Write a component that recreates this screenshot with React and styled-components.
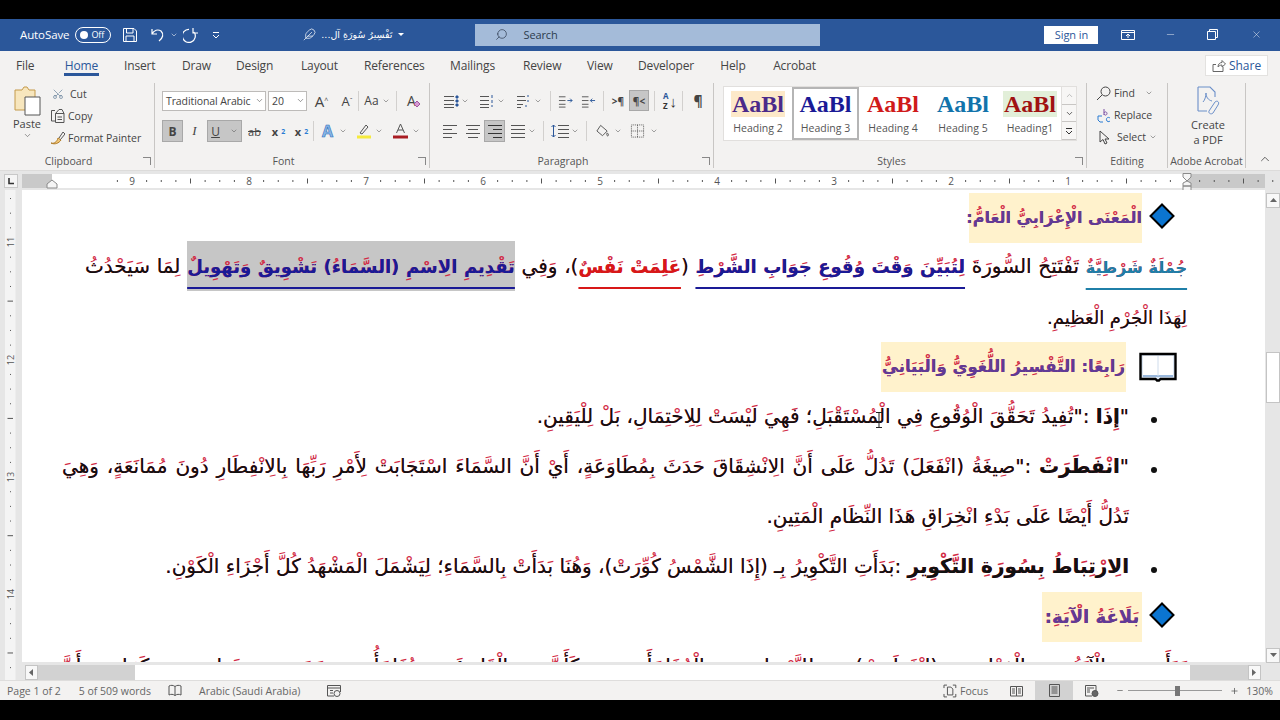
import React, { createContext, useContext } from 'react';
import styled, { createGlobalStyle } from 'styled-components';
import { ChevronDown, Scissors, Feather, Search, Minus, X, Plus, ChevronUp } from 'lucide-react';

const GlobalStyle = createGlobalStyle`
  html, body { margin: 0; padding: 0; background: #000; }
  body { font-family: 'Open Sans', 'Noto Sans', sans-serif; }
  * { box-sizing: border-box; }
`;

const Shell = styled.div`
  width: 1280px;
  height: 720px;
  display: flex;
  flex-direction: column;
  background: #000;
  overflow: hidden;
`;

const Band = styled.div`
  height: ${(p) => p.$h}px;
  flex: none;
  background: #000;
`;

/* ---------- title bar ---------- */
const TitleBar = styled.div`
  height: 32px;
  flex: none;
  background: #2b579a;
  color: #fff;
  display: flex;
  align-items: center;
  font-size: 11.5px;
  letter-spacing: -0.1px;
  padding-left: 20px;
  padding-bottom: 1px;
`;

const QatIcon = styled.span`
  display: inline-flex;
  align-items: center;
  justify-content: center;
  width: ${(p) => p.$w}px;
  margin-left: ${(p) => p.$ml || 0}px;
  margin-right: ${(p) => p.$mr || 0}px;
  color: #fff;
`;

const Toggle = styled.span`
  width: 36px;
  height: 16px;
  margin-left: 6px;
  border: 1px solid #fff;
  border-radius: 8px;
  display: inline-flex;
  align-items: center;
  padding-left: 4px;
  gap: 3px;
  font-size: 9px;
  &::before {
    content: '';
    width: 8px;
    height: 8px;
    border-radius: 50%;
    background: #fff;
  }
`;

const DocTitle = styled.span`
  width: 72px;
  margin-left: 4px;
  direction: rtl;
  font-family: 'DejaVu Sans', sans-serif;
  font-size: 9.5px;
  white-space: nowrap;
`;

const SearchBox = styled.div`
  width: 345px;
  height: 22px;
  margin-left: 70px;
  background: #a4bbd9;
  color: #2d3b4e;
  display: flex;
  align-items: center;
  padding-left: 20px;
  gap: 15px;
  font-size: 11px;
`;

const SignIn = styled.div`
  width: 54px;
  height: 18px;
  margin-left: 224px;
  background: #fff;
  color: #2b579a;
  display: flex;
  align-items: center;
  justify-content: center;
  font-size: 11px;
`;

/* ---------- tabs ---------- */
const TabBar = styled.div`
  height: 29px;
  flex: none;
  background: #f3f2f1;
  display: flex;
  align-items: center;
  padding-left: 16px;
  position: relative;
`;

const Tab = styled.span`
  font-size: 12px;
  letter-spacing: -0.15px;
  color: ${(p) => (p.$on ? '#2b579a' : '#444')};
  width: ${(p) => p.$w}px;
  margin-right: ${(p) => p.$gap}px;
  line-height: 30px;
  text-align: center;
  border-bottom: ${(p) => (p.$on ? '3px solid #2b579a' : 'none')};
  height: ${(p) => (p.$on ? 25 : 29)}px;
  margin-bottom: ${(p) => (p.$on ? 4 : 0)}px;
`;

const ShareButton = styled.div`
  margin-left: auto;
  margin-right: 12px;
  width: 63px;
  height: 21px;
  background: #fff;
  border: 1px solid #e3e2e0;
  display: flex;
  align-items: center;
  justify-content: center;
  gap: 3px;
  font-size: 12px;
  color: #2b579a;
`;

/* ---------- ribbon ---------- */
const Ribbon = styled.div`
  height: 90px;
  flex: none;
  background: #f3f2f1;
  display: flex;
  align-items: flex-start;
  color: #444;
  font-size: 11px;
`;

const Group = styled.div`
  width: ${(p) => p.$w}px;
  height: 85px;
  margin-top: 3px;
  flex: none;
  display: flex;
  flex-direction: column;
  border-right: ${(p) => (p.$noline ? 'none' : '1px solid #c8c6c4')};
`;

const GroupBody = styled.div`
  flex: 1;
  display: flex;
  padding: ${(p) => p.$pad || '7px 0 0 7px'};
`;

const GroupLabel = styled.div`
  height: 15px;
  display: flex;
  align-items: center;
  font-size: 10.5px;
  color: #555;
`;

const LabelText = styled.span`
  flex: 1;
  text-align: center;
`;

const Launcher = styled.span`
  width: 8px;
  height: 8px;
  margin: 0 3px 0 6px;
  border-left: 1px solid #888;
  border-bottom: 1px solid #888;
  position: relative;
  transform: rotate(180deg);
`;

const PasteCol = styled.div`
  width: 34px;
  margin-right: 6px;
  flex: none;
  display: flex;
  flex-direction: column;
  align-items: center;
  color: #444;
`;

const SmallCol = styled.div`
  display: flex;
  flex-direction: column;
  margin-top: ${(p) => p.$mt || 0}px;
  gap: ${(p) => p.$gap || 3}px;
`;

const SmallRow = styled.div`
  display: flex;
  align-items: center;
  height: ${(p) => p.$h || 19}px;
  white-space: nowrap;
  font-size: 10.5px;
  gap: ${(p) => p.$gap || 3}px;
  margin-left: ${(p) => p.$ml || 0}px;
`;

const Tools = styled.div`
  display: flex;
  flex-direction: column;
  gap: 9px;
`;

const ToolRow = styled.div`
  display: flex;
  align-items: center;
  height: ${(p) => p.$h || 21}px;
`;

const Tool = styled.span`
  flex: none;
  width: ${(p) => p.$w}px;
  height: ${(p) => p.$h || 21}px;
  margin-left: ${(p) => p.$ml || 0}px;
  display: inline-flex;
  align-items: center;
  justify-content: center;
  gap: 3px;
  color: #444;
  font-size: ${(p) => p.$fs || 12}px;
  font-family: ${(p) => p.$serif || 'inherit'};
  font-style: ${(p) => (p.$it ? 'italic' : 'normal')};
  font-weight: ${(p) => (p.$b ? 700 : 400)};
  background: ${(p) => (p.$on ? '#c6c6c6' : 'transparent')};
  border: ${(p) => (p.$on ? '1px solid #a8a8a8' : 'none')};
`;

const Divider = styled.span`
  flex: none;
  width: 1px;
  height: 20px;
  margin-left: ${(p) => p.$ml || 0}px;
  background: #d2d0ce;
`;

const Combo = styled.span`
  flex: none;
  width: ${(p) => p.$w}px;
  height: 20px;
  margin-left: ${(p) => p.$ml || 0}px;
  padding: 0 1px 0 3px;
  background: #fff;
  border: 1px solid #bdbbb9;
  display: inline-flex;
  align-items: center;
  justify-content: space-between;
  font-size: 10.5px;
  letter-spacing: -0.1px;
  white-space: nowrap;
`;

const Gallery = styled.div`
  margin-left: 9px;
  width: 354px;
  height: 55px;
  background: #fff;
  border: 1px solid #e1dfdd;
  display: flex;
`;

const StyleItem = styled.div`
  width: ${(p) => p.$w}px;
  flex: none;
  display: flex;
  flex-direction: column;
  align-items: center;
  padding-top: ${(p) => (p.$on ? 2 : 4)}px;
  border: ${(p) => (p.$on ? '2px solid #b5b5b5' : 'none')};
  font-size: 10.5px;
  color: #555;
`;

const Preview = styled.span`
  font-family: 'Liberation Serif', serif;
  font-weight: 700;
  font-size: 24px;
  line-height: 26px;
  height: 26px;
  padding: 0 1px;
  color: ${(p) => p.$c};
  background: ${(p) => p.$bg || 'transparent'};
  margin-bottom: 4px;
`;

const GalleryScroll = styled.div`
  margin-left: auto;
  width: 15px;
  display: flex;
  flex-direction: column;
  border-left: 1px solid #e1dfdd;
`;

const GalleryBtn = styled.span`
  flex: 1;
  display: flex;
  align-items: center;
  justify-content: center;
  background: #f7f6f5;
  border-bottom: 1px solid #c8c6c4;
  color: ${(p) => p.$c || '#333'};
`;

const Stack = styled.div`
  display: flex;
  flex-direction: column;
  align-items: center;
  line-height: 15px;
  width: 100%;
`;

const Collapse = styled.span`
  margin-left: 12px;
  margin-top: 72px;
  color: #444;
  display: inline-flex;
`;

/* ---------- rulers ---------- */
const RulerBar = styled.div`
  height: 20px;
  flex: none;
  background: #e6e6e6;
  display: flex;
  align-items: center;
  border-top: 1px solid #dcdbda;
`;

const CornerBox = styled.span`
  width: 14px;
  height: 14px;
  margin: 0 4px;
  background: #f5f5f5;
  border: 1px solid #c8c8c8;
  display: flex;
  align-items: center;
  justify-content: center;
`;

const Workspace = styled.div`
  flex: 1;
  min-height: 0;
  display: grid;
  grid-template-columns: 22px 1243px 15px;
  grid-template-rows: 472px 18px;
  background: #e6e6e6;
`;

const VRulerCell = styled.div`
  grid-column: 1;
  grid-row: 1 / 3;
  background: #e6e6e6;
  overflow: hidden;
`;

/* ---------- document ---------- */
const Page = styled.div`
  grid-column: 2;
  grid-row: 1;
  background: #fff;
  overflow: hidden;
  direction: rtl;
  padding: 3px 78px 0 0;
  font-family: 'DejaVu Sans', sans-serif;
  color: #111;
`;

const Row = styled.div`
  height: 49.85px;
  line-height: 49.85px;
  font-size: ${(p) => p.$fs || 20}px;
  display: flex;
  align-items: center;
  white-space: nowrap;
  padding-right: ${(p) => p.$inset || 0}px;
`;

const Line = styled.div`
  width: ${(p) => p.$w}px;
  flex: none;
  white-space: nowrap;
  text-align: justify;
  text-align-last: ${(p) => (p.$fit ? 'justify' : 'right')};
`;

const HeadRow = styled(Row)`
  gap: ${(p) => p.$gap}px;
`;

const HeadBand = styled.div`
  height: 50px;
  line-height: 50px;
  width: ${(p) => p.$w}px;
  text-align: center;
  font-size: ${(p) => p.$fs || 20}px;
  font-weight: 700;
  color: #5f3b97;
  background: #fff2cc;
  white-space: nowrap;
`;

const Dot = styled.span`
  flex: none;
  width: 6px;
  height: 6px;
  border-radius: 50%;
  background: #111;
  margin-left: 22px;
  margin-top: 6px;
`;

const Colored = styled.span`
  color: ${(p) => p.$c};
  font-size: ${(p) => p.$fs || 18}px;
  font-weight: 700;
  text-decoration: underline;
  text-decoration-color: ${(p) => p.$c};
  text-decoration-thickness: 2px;
  text-underline-offset: ${(p) => p.$off || 14}px;
  text-decoration-skip-ink: none;
`;

const Selected = styled.span`
  background: #c6c6c6;
  padding: 13px 0;
`;

const Strong = styled.b`
  font-weight: 700;
`;

/* the harakat are red: a red copy of the voweled text sits under the bare letters */
const InkStack = styled.div`
  display: grid;
  & > * {
    grid-area: 1 / 1;
  }
`;

const MarkInk = styled.div`
  color: #d22a45;
  user-select: none;
  & * {
    color: inherit !important;
    text-decoration-color: transparent !important;
  }
`;

const BaseInk = styled.div`
  ${Selected} {
    background: transparent;
  }
`;

const Cursor = styled.span`
  position: absolute;
  left: 875px;
  top: 411px;
  display: block;
`;

const VScroll = styled.div`
  grid-column: 3;
  grid-row: 1 / 3;
  display: flex;
  flex-direction: column;
  background: #e6e6e6;
  padding: 3px 0 17px 1px;
`;

const ScrollBtn = styled.span`
  height: 15px;
  flex: none;
  background: #f8f8f8;
  border: 1px solid #c4c4c4;
  display: flex;
  align-items: center;
  justify-content: center;
  margin-top: ${(p) => p.$mt || 'auto'};
`;

const Thumb = styled.span`
  height: 51px;
  flex: none;
  background: #fff;
  border: 1px solid #c4c4c4;
  margin-top: 144px;
`;

const HScroll = styled.div`
  grid-column: 2;
  grid-row: 2;
  display: flex;
  align-items: center;
  padding: 3px 4px 0 3px;
  background: #e6e6e6;
`;

const HBtn = styled.span`
  width: 13px;
  height: 15px;
  flex: none;
  background: #f8f8f8;
  border: 1px solid #c4c4c4;
  display: flex;
  align-items: center;
  justify-content: center;
`;

const HTrack = styled.span`
  flex: 1;
  height: 15px;
  background: #d2d2d2;
  display: flex;
  padding: 0 58px 0 97px;
`;

const HThumb = styled.span`
  flex: 1;
  background: #fff;
`;

/* ---------- status bar ---------- */
const StatusBar = styled.div`
  height: 20px;
  flex: none;
  background: #f3f2f1;
  border-top: 1px solid #dedddc;
  display: flex;
  align-items: center;
  font-size: 10.5px;
  color: #666;
  padding-left: 7px;
`;

const StatusItem = styled.span`
  flex: none;
  white-space: nowrap;
  margin-left: ${(p) => p.$ml || 0}px;
  width: ${(p) => (p.$w ? `${p.$w}px` : 'auto')};
  display: inline-flex;
  align-items: center;
  justify-content: center;
  gap: 3px;
`;

const ViewBtn = styled.span`
  width: ${(p) => p.$w}px;
  height: 19px;
  flex: none;
  margin-left: ${(p) => p.$ml || 0}px;
  display: inline-flex;
  align-items: center;
  justify-content: center;
  background: ${(p) => (p.$on ? '#d2d2d2' : 'transparent')};
`;

const ZoomSlider = styled.span`
  width: 94px;
  height: 1px;
  flex: none;
  margin-left: 4px;
  background: #9a9a9a;
  display: flex;
  align-items: center;
  padding-left: 47px;
  &::after {
    content: '';
    width: 5px;
    height: 10px;
    background: #777;
  }
`;

/* ---------- helpers and drawings ---------- */
const MarksOn = createContext(true);

const Voc = ({ t }) => {
  const on = useContext(MarksOn);
  return on ? t : t.replace(/[\u064B-\u0652\u0670]/g, '');
};

const Inked = ({ children }) => (
  <InkStack>
    <MarkInk aria-hidden="true">{children}</MarkInk>
    <BaseInk>
      <MarksOn.Provider value={false}>{children}</MarksOn.Provider>
    </BaseInk>
  </InkStack>
);

const Caret = ({ s = 9, c = '#555' }) => <ChevronDown size={s} color={c} strokeWidth={1.6} />;

const Svg = ({ w = 16, h = 16, children, ...rest }) => (
  <svg width={w} height={h} viewBox={`0 0 ${w} ${h}`} fill="none" stroke="#555" strokeWidth="1" {...rest}>
    {children}
  </svg>
);

const Lines = ({ x1 = 1, x2 = 15, ys = [3, 7, 11, 14], stroke = '#555' }) =>
  ys.map((y, i) => <path key={i} d={`M${Array.isArray(x1) ? x1[i] : x1} ${y + 0.5}H${Array.isArray(x2) ? x2[i] : x2}`} stroke={stroke} />);

const Diamond = () => (
  <svg width="26" height="26" viewBox="0 0 26 26" style={{ flex: 'none', marginBottom: 3 }}>
    <path d="M13 1.5 24.5 13 13 24.5 1.5 13Z" fill="#0b75d1" stroke="#000" strokeWidth="2" />
  </svg>
);

const BookIcon = () => (
  <svg width="38" height="30" viewBox="0 0 38 30" style={{ flex: 'none' }}>
    <path d="M1.5 2H36.5V27H21.5L20 28.5H18L16.5 27H1.5Z" fill="#dbe6f3" stroke="#000" strokeWidth="2.4" />
    <path d="M4 4H34V23H4Z" fill="#fff" />
    <path d="M4 24H34" stroke="#9ab8dc" strokeWidth="2" />
    <path d="M19 4V24" stroke="#cfdcec" />
  </svg>
);

const tick = (i) => (i % 8 === 0 ? 0 : i % 4 === 0 ? 2 : 0.5);

const HRuler = () => {
  const marks = [];
  for (let i = -1; i < 86; i++) marks.push(i);
  return (
    <svg width="1243" height="14" viewBox="0 0 1243 14" style={{ overflow: 'visible' }}>
      <rect width="1243" height="14" fill="#fff" />
      <rect width="30" height="14" fill="#c9c9c9" />
      <rect x="1165" width="78" height="14" fill="#c9c9c9" />
      {marks.map((i) => {
        const x = 110 + (i - 8) * 14.625 + 117;
        if (i % 8 === 0) return null;
        const h = tick(i);
        return <path key={i} d={`M${x} ${7 - h - 0.5}V${7 + h + 0.5}`} stroke="#555" strokeWidth="1" />;
      })}
      {[9, 8, 7, 6, 5, 4, 3, 2, 1].map((n, i) => (
        <text key={n} x={110 + i * 117} y="10.5" fontSize="10" fill="#555" textAnchor="middle" fontFamily="Open Sans, sans-serif">
          {n}
        </text>
      ))}
      <path d="M25 14V10L30 6L35 10V14Z" fill="#f5f5f5" stroke="#8a8a8a" />
      <path d="M1161 -.5H1169V3L1165 7L1161 3Z" fill="#f5f5f5" stroke="#8a8a8a" />
      <path d="M1161 12V9L1165 7L1169 9V12ZM1161 12H1169V17H1161Z" fill="#f5f5f5" stroke="#8a8a8a" />
    </svg>
  );
};

const VRuler = () => {
  const marks = [];
  for (let i = 0; i < 36; i++) marks.push(i);
  return (
    <svg width="22" height="490" viewBox="0 0 22 490">
      <rect x="5" width="10.5" height="490" fill="#f4f4f4" />
      {marks.map((i) => {
        const y = 52 - 14.66 * 4 + i * 14.66 + 0.5;
        if (i % 8 === 4) return null;
        const half = i % 8 === 0;
        return <path key={i} d={half ? `M7.5 ${y}H13` : `M10 ${y}h1`} stroke="#555" />;
      })}
      {[['11', 52], ['12', 170], ['13', 287], ['14', 404]].map(([n, y]) => (
        <text key={n} transform={`translate(13.5 ${y}) rotate(-90)`} fontSize="9" fill="#555" textAnchor="middle" fontFamily="Open Sans, sans-serif">
          {n}
        </text>
      ))}
    </svg>
  );
};

const TABS = [
  ['File', 17, 31], ['Home', 35, 25], ['Insert', 31, 27], ['Draw', 28, 26], ['Design', 37, 28], ['Layout', 35, 28],
  ['References', 59, 27], ['Mailings', 45, 28], ['Review', 37, 27], ['View', 25, 26], ['Developer', 56, 26],
  ['Help', 26, 27], ['Acrobat', 43, 0],
];

const STYLES = [
  ['Heading 2', '#4b2a8a', '#fde9c9', 68],
  ['Heading 3', '#1a1a96', null, 67, true],
  ['Heading 4', '#d01a1a', null, 68],
  ['Heading 5', '#1273ab', null, 72],
  ['Heading1', '#a01212', '#e2efd9', 62],
];

export default function App() {
  return (
    <Shell>
      <GlobalStyle />
      <Band $h={19} />
      <TitleBar>
        <span>AutoSave</span>
        <Toggle>Off</Toggle>
        <QatIcon $w={16} $ml={11}>
          <Svg stroke="#fff"><path d="M1.5 1.5H12L14.5 4V14.5H1.5ZM4.5 1.5V6H11V1.5M4 14.5V9H12V14.5" /></Svg>
        </QatIcon>
        <QatIcon $w={16} $ml={12}>
          <Svg stroke="#fff" strokeWidth="1.2"><path d="M2 2V7H7M2 7C4 3 8 2 11 4C14 7 13 11 9 14" /></Svg>
        </QatIcon>
        <QatIcon $w={10} $ml={3}><Caret c="#fff" s={8} /></QatIcon>
        <QatIcon $w={16} $ml={4}>
          <Svg stroke="#fff" strokeWidth="1.2"><path d="M10 1V6H15M11 5A6.5 6.5 0 1 1 6 2.4" /></Svg>
        </QatIcon>
        <QatIcon $w={8} $ml={13}>
          <Svg w={8} h={8} stroke="#fff"><path d="M1 1.5H7M1 4L4 7L7 4" /></Svg>
        </QatIcon>
        <QatIcon $w={14} $ml={82}><Feather size={13} color="#fff" strokeWidth={1.3} /></QatIcon>
        <DocTitle>تَفْسِيرُ سُورَةِ آل...</DocTitle>
        <QatIcon $w={8} $ml={5}>
          <Svg w={6} h={4} stroke="none"><path d="M0 0H6L3 3Z" fill="#fff" /></Svg>
        </QatIcon>
        <SearchBox>
          <Search size={13} color="#2d3b4e" strokeWidth={1.3} style={{ transform: 'scaleX(-1)' }} />
          Search
        </SearchBox>
        <SignIn>Sign in</SignIn>
        <QatIcon $w={14} $ml={23}>
          <Svg w={14} h={12} stroke="#fff"><path d="M.5 1.5H13.5V10.5H.5ZM.5 3.5H13.5M7 9V5M5 7L7 5L9 7" /></Svg>
        </QatIcon>
        <QatIcon $w={11} $ml={30}><Minus size={11} color="#fff" strokeWidth={1} /></QatIcon>
        <QatIcon $w={11} $ml={31}>
          <Svg w={11} h={11} stroke="#fff"><path d="M.5 2.5H8.5V10.5H.5ZM2.5 2.5V.5H10.5V8.5H8.5" /></Svg>
        </QatIcon>
        <QatIcon $w={11} $ml={33}><X size={13} color="#fff" strokeWidth={1} /></QatIcon>
      </TitleBar>

      <TabBar>
        {TABS.map(([name, w, gap]) => (
          <Tab key={name} $w={w} $gap={gap} $on={name === 'Home'}>{name}</Tab>
        ))}
        <ShareButton>
          <Svg w={14} h={13} stroke="#666"><path d="M1 5.5H4M1 5.5V12.5H11V8M6 8C6 5 8 3.5 10 3.5V1.5L13.5 5L10 8V6C8 6 7 7 6 8Z" /></Svg>
          Share
        </ShareButton>
      </TabBar>

      <Ribbon>
        <Group $w={155}>
          <GroupBody $pad="3px 0 0 10px">
            <PasteCol>
              <svg width="28" height="30" viewBox="0 0 28 30" style={{ flex: 'none' }}>
                <path d="M2 4H9L11 1H14L16 4H22V24H2Z" fill="#f7e6bd" stroke="#c49a4b" />
                <path d="M12 11H27V29H12Z" fill="#fff" stroke="#555" />
              </svg>
              <span>Paste</span>
              <Caret s={9} />
            </PasteCol>
            <SmallCol $gap={3} $mt={-2}>
              <SmallRow $gap={6} $ml={2}>
                <Scissors size={12} color="#53708f" strokeWidth={1.2} style={{ transform: 'rotate(-90deg)' }} /> Cut
              </SmallRow>
              <SmallRow $gap={2}>
                <Svg><path d="M5 2.5H1.5V13H5M5.5 5.5V14.5H14V5.5ZM5.5 5.5L9 1.5H12L14 5.5M7.5 9H12M7.5 11.5H12" /></Svg> Copy
              </SmallRow>
              <SmallRow $gap={3} >
                <Svg w={15} h={15}>
                  <path d="M1 13C4 14 7 12 8 8L11 10C9 13 5 15 1 13Z" fill="#f2c879" stroke="#b07a25" />
                  <path d="M9 8L13 2L15 4L10.5 9.5" stroke="#555" />
                </Svg>
                Format Painter
              </SmallRow>
            </SmallCol>
          </GroupBody>
          <GroupLabel><LabelText>Clipboard</LabelText><Launcher /></GroupLabel>
        </Group>

        <Group $w={275}>
          <GroupBody>
            <Tools>
              <ToolRow>
                <Combo $w={104}>Traditional Arabic <Caret s={9} /></Combo>
                <Combo $w={39} $ml={2}>20 <Caret s={9} /></Combo>
                <Tool $w={17} $ml={6} $fs={15}>A<sup style={{ fontSize: 7, marginLeft: -3 }}>^</sup></Tool>
                <Tool $w={18} $ml={8} $fs={13}>A<sup style={{ fontSize: 7, marginLeft: -3 }}>ˇ</sup></Tool>
                <Divider $ml={2} />
                <Tool $w={26} $ml={5} $fs={12}>Aa<Caret s={8} /></Tool>
                <Divider $ml={6} />
                <Tool $w={18} $ml={8} $fs={14}>A<svg width="8" height="8" viewBox="0 0 8 8" style={{ marginLeft: -6, marginTop: 6 }}><path d="M1 4L4 1L7 4L4 7Z" fill="#d69bd2" stroke="#a155a0" /></svg></Tool>
              </ToolRow>
              <ToolRow $h={22}>
                <Tool $w={21} $h={22} $on $b $fs={12}>B</Tool>
                <Tool $w={13} $ml={5} $it $serif="'Liberation Serif', serif" $fs={13}>I</Tool>
                <Tool $w={35} $h={22} $ml={6} $on $fs={12}><u>U</u><span style={{ width: 4 }} /><Caret s={8} /></Tool>
                <Tool $w={15} $ml={5} $fs={11}><s>ab</s></Tool>
                <Tool $w={13} $ml={10} $fs={11} $b>x<sub style={{ fontSize: 7, color: '#2b7cd3' }}>2</sub></Tool>
                <Tool $w={13} $ml={10} $fs={11} $b>x<sup style={{ fontSize: 7, color: '#2b7cd3' }}>2</sup></Tool>
                <Divider $ml={5} />
                <Tool $w={15} $ml={6} $fs={16} $b style={{ color: '#8ab8e8', WebkitTextStroke: '0.6px #2b6cb8' }}>A</Tool>
                <Tool $w={10} $ml={3}><Caret s={8} /></Tool>
                <Tool $w={16} $ml={8}>
                  <Svg h={18}>
                    <path d="M4 11L10 3L12 5L6 12Z" /><path d="M1 15H15" stroke="#f5ea3d" strokeWidth="3" />
                  </Svg>
                </Tool>
                <Tool $w={10} $ml={2}><Caret s={8} /></Tool>
                <Tool $w={15} $ml={9}>
                  <Svg w={15} h={18}>
                    <path d="M3.5 11L7.5 2L11.5 11M5 8H10" /><path d="M0 15H15" stroke="#a81c22" strokeWidth="3" />
                  </Svg>
                </Tool>
                <Tool $w={10} $ml={3}><Caret s={8} /></Tool>
              </ToolRow>
            </Tools>
          </GroupBody>
          <GroupLabel><LabelText>Font</LabelText><Launcher /></GroupLabel>
        </Group>

        <Group $w={284}>
          <GroupBody $pad="7px 0 0 12px">
            <Tools>
              <ToolRow>
                <Tool $w={17}><Svg><Lines x2={11} /><path d="M13 3h2v2h-2zM13 7h2v2h-2zM13 11h2v2h-2z" fill="#2b579a" stroke="#2b579a" /></Svg></Tool>
                <Tool $w={10} $ml={1}><Caret s={8} /></Tool>
                <Tool $w={17} $ml={8}><Svg><Lines x2={10} /><path d="M13 2v3M13 7v3M13 12v2" stroke="#2b579a" /></Svg></Tool>
                <Tool $w={10} $ml={1}><Caret s={8} /></Tool>
                <Tool $w={17} $ml={9}><Svg><Lines x2={[9, 10, 7, 5]} /><path d="M12 2v2M12 7v2M10 12v2" stroke="#2b579a" /></Svg></Tool>
                <Tool $w={10} $ml={1}><Caret s={8} /></Tool>
                <Divider $ml={7} />
                <Tool $w={15} $ml={7}><Svg><Lines x2={8} /><path d="M10 7.5H15M13 5.5L15 7.5L13 9.5" stroke="#2b579a" /></Svg></Tool>
                <Tool $w={15} $ml={8}><Svg><Lines x2={8} /><path d="M15 7.5H10M12 5.5L10 7.5L12 9.5" stroke="#2b579a" /></Svg></Tool>
                <Divider $ml={7} />
                <Tool $w={14} $ml={7} $fs={10} $b>&gt;¶</Tool>
                <Tool $w={20} $ml={4} $on $fs={10} $b>¶&lt;</Tool>
                <Divider $ml={5} />
                <Tool $w={18} $ml={6} $fs={8} $b style={{ flexDirection: 'row', gap: 1, color: '#2b579a' }}>
                  <span style={{ lineHeight: '10px' }}>A<br /><span style={{ color: '#333' }}>Z</span></span>
                  <span style={{ color: '#333', fontSize: 15, fontWeight: 400 }}>↓</span>
                </Tool>
                <Divider $ml={3} />
                <Tool $w={12} $ml={9} $fs={14} $b>¶</Tool>
              </ToolRow>
              <ToolRow $h={22}>
                <Tool $w={16}><Svg><Lines x2={[15, 10, 15, 10]} ys={[2, 6, 10, 14]} /></Svg></Tool>
                <Tool $w={16} $ml={7}><Svg><Lines x1={[1, 3, 1, 3]} x2={[15, 13, 15, 13]} ys={[2, 6, 10, 14]} /></Svg></Tool>
                <Tool $w={21} $h={22} $ml={3} $on><Svg><Lines x1={[1, 6, 1, 6]} ys={[2, 6, 10, 14]} stroke="#333" /></Svg></Tool>
                <Tool $w={16} $ml={5}><Svg><Lines ys={[2, 6, 10, 14]} /></Svg></Tool>
                <Tool $w={10} $ml={1}><Caret s={8} /></Tool>
                <Divider $ml={6} />
                <Tool $w={19} $ml={6}><Svg w={19}><Lines x1={8} x2={19} ys={[2, 6, 10, 14]} /><path d="M3.5 2V14M1.5 4L3.5 2L5.5 4M1.5 12L3.5 14L5.5 12" stroke="#2b579a" /></Svg></Tool>
                <Tool $w={10} $ml={1}><Caret s={8} /></Tool>
                <Divider $ml={6} />
                <Tool $w={15} $ml={8}><Svg><path d="M6 2L13 8L8 13L2 8ZM13 10C14 11 15 12 14 13C13 14 12 12 13 10Z" /></Svg></Tool>
                <Tool $w={10} $ml={3}><Caret s={8} /></Tool>
                <Tool $w={15} $ml={7}>
                  <Svg><path d="M1.5 1.5H14.5V14.5H1.5ZM8 1.5V14.5M1.5 8H14.5" strokeDasharray="1 1" /></Svg>
                </Tool>
                <Tool $w={10} $ml={4}><Caret s={8} /></Tool>
              </ToolRow>
            </Tools>
          </GroupBody>
          <GroupLabel><LabelText>Paragraph</LabelText><Launcher /></GroupLabel>
        </Group>

        <Group $w={373}>
          <GroupBody $pad="3px 0 0 0">
            <Gallery>
              {STYLES.map(([name, c, bg, w, on]) => (
                <StyleItem key={name} $w={w} $on={on}>
                  <Preview $c={c} $bg={bg}>AaBl</Preview>
                  {name}
                </StyleItem>
              ))}
              <GalleryScroll>
                <GalleryBtn $c="#aaa"><ChevronUp size={9} /></GalleryBtn>
                <GalleryBtn><ChevronDown size={9} /></GalleryBtn>
                <GalleryBtn><Svg w={8} h={8} stroke="#333"><path d="M1 1.5H7M1 4L4 7L7 4" /></Svg></GalleryBtn>
              </GalleryScroll>
            </Gallery>
          </GroupBody>
          <GroupLabel><LabelText>Styles</LabelText><Launcher /></GroupLabel>
        </Group>

        <Group $w={81}>
          <GroupBody $pad="0 0 0 9px">
            <SmallCol $gap={2}>
              <SmallRow $gap={3} $h={20}>
                <Svg w={15} h={15} stroke="#444"><circle cx="9.5" cy="5.5" r="4.5" /><path d="M6 9L1 14" /></Svg>
                Find <span style={{ width: 4 }} /><Caret s={8} />
              </SmallRow>
              <SmallRow $gap={3} $h={20}>
                <Svg w={15} h={15} stroke="#2b7cd3"><path d="M6 8H2V12L4 14H7" /><path d="M8 1V7M8 5C9 3 11 4 11 5.5S9 8 8 6" stroke="#7a4fa3" /><path d="M14 10C12 8.5 10 10 10.5 12S13 14 14 13" /></Svg>
                Replace
              </SmallRow>
              <SmallRow $gap={3} $h={20} $ml={1}>
                <Svg w={14} h={15} stroke="#444"><path d="M3 1V12L6 9.5L8 14L10 13L8 9H12Z" /></Svg>
                <span style={{ marginLeft: 3 }}>Select</span><Caret s={8} />
              </SmallRow>
            </SmallCol>
          </GroupBody>
          <GroupLabel><LabelText>Editing</LabelText></GroupLabel>
        </Group>

        <Group $w={78}>
          <GroupBody $pad="2px 0 0 3px">
            <Stack>
              <svg width="26" height="32" viewBox="0 0 26 32" style={{ flex: 'none' }}>
                <path d="M3 2H15L20 7V12M12 26H3Z M3 2V26" fill="none" stroke="#6b8fc9" strokeWidth="1.1" />
                <path d="M8 17C10 15 11 11 11 8C11 12 13 15 17 16" fill="none" stroke="#6b8fc9" />
                <path d="M14 26L20 17C22 15 25 17 23 20L18 28C16 30 13 28 14 26Z" fill="none" stroke="#6b8fc9" />
              </svg>
              <span>Create</span>
              <span>a PDF</span>
            </Stack>
          </GroupBody>
          <GroupLabel><LabelText style={{ whiteSpace: 'nowrap' }}>Adobe Acrobat</LabelText></GroupLabel>
        </Group>
        <Collapse><ChevronUp size={14} strokeWidth={1.4} /></Collapse>
      </Ribbon>

      <RulerBar>
        <CornerBox>
          <Svg w={8} h={8} stroke="#333" strokeWidth="1.6"><path d="M2 1V6.5H7" /></Svg>
        </CornerBox>
        <HRuler />
      </RulerBar>

      <Workspace>
        <VRulerCell><VRuler /></VRulerCell>
        <Page>
          <HeadRow $gap={7} $inset={12}>
            <Diamond />
            <HeadBand $w={173} $fs={16}><Inked><Voc t="الْمَعْنَى الْإِعْرَابِيُّ الْعَامُّ:" /></Inked></HeadBand>
          </HeadRow>
          <Row>
            <Line $w={1102} $fit>
              <Inked>
                <div>
                  <Colored $c="#1f7fa8" $fs={16} $off={15}><Voc t="جُمْلَةٌ شَرْطِيَّةٌ" /></Colored>{' '}
                  <Voc t="تَفْتَتِحُ السُّورَةَ" />{' '}
                  <Colored $c="#1a1a96"><Voc t="لِتُبَيِّنَ وَقْتَ وُقُوعِ جَوَابِ الشَّرْطِ" /></Colored>{' '}
                  {'('}<Colored $c="#d81818"><Voc t="عَلِمَتْ نَفْسٌ" /></Colored>{')'}، <Voc t="وَفِي" />{' '}
                  <Selected><Colored $c="#1a1a96"><Voc t="تَقْدِيمِ الِاسْمِ (السَّمَاءُ) تَشْوِيقٌ وَتَهْوِيلٌ" /></Colored></Selected>{' '}
                  <Voc t="لِمَا سَيَحْدُثُ" />
                </div>
              </Inked>
            </Line>
          </Row>
          <Row $fs={18}>
            <Line $w={160}><Inked><Voc t="لِهَذَا الْجُرْمِ الْعَظِيمِ." /></Inked></Line>
          </Row>
          <HeadRow $gap={13} $inset={10}>
            <BookIcon />
            <HeadBand $w={245} $fs={16.5}><Inked><Voc t="رَابِعًا: التَّفْسِيرُ اللُّغَوِيُّ وَالْبَيَانِيُّ" /></Inked></HeadBand>
          </HeadRow>
          <Row $inset={30}>
            <Dot />
            <Line $w={600}><Inked><div>"<Strong><Voc t="إِذَا" /></Strong> :"<Voc t="تُفِيدُ تَحَقُّقَ الْوُقُوعِ فِي الْمُسْتَقْبَلِ؛ فَهِيَ لَيْسَتْ لِلِاحْتِمَالِ، بَلْ لِلْيَقِينِ." /></div></Inked></Line>
          </Row>
          <Row $inset={30}>
            <Dot />
            <Line $w={1067} $fit><Inked><div>"<Strong><Voc t="انْفَطَرَتْ" /></Strong> :"<Voc t="صِيغَةُ (انْفَعَلَ) تَدُلُّ عَلَى أَنَّ الِانْشِقَاقَ حَدَثَ بِمُطَاوَعَةٍ، أَيْ أَنَّ السَّمَاءَ اسْتَجَابَتْ لِأَمْرِ رَبِّهَا بِالِانْفِطَارِ دُونَ مُمَانَعَةٍ، وَهِيَ" /></div></Inked></Line>
          </Row>
          <Row $inset={58}>
            <Line $w={370}><Inked><Voc t="تَدُلُّ أَيْضًا عَلَى بَدْءِ انْخِرَاقِ هَذَا النِّظَامِ الْمَتِينِ." /></Inked></Line>
          </Row>
          <Row $inset={30}>
            <Dot />
            <Line $w={980}><Inked><div><Strong><Voc t="الِارْتِبَاطُ بِسُورَةِ التَّكْوِيرِ" /></Strong> :<Voc t="بَدَأَتِ التَّكْوِيرُ بِـ (إِذَا الشَّمْسُ كُوِّرَتْ)، وَهُنَا بَدَأَتْ بِالسَّمَاءِ؛ لِيَشْمَلَ الْمَشْهَدُ كُلَّ أَجْزَاءِ الْكَوْنِ." /></div></Inked></Line>
          </Row>
          <HeadRow $gap={7} $inset={12}>
            <Diamond />
            <HeadBand $w={100} $fs={18}><Inked><Voc t="بَلَاغَةُ الْآيَةِ:" /></Inked></HeadBand>
          </HeadRow>
          <Row>
            <Line $w={1126} $fit><Inked><Voc t="بَدَأَتِ الْآيَةُ بِالْفِعْلِ (انْفَطَرَتْ) لِلتَّهْوِيلِ وَالْمُفَاجَأَةِ، وَكَأَنَّ الْقَارِئَ يُفَاجَأُ بِحَدَثٍ عَظِيمٍ، كَمَا أَنَّ" /></Inked></Line>
          </Row>
        </Page>
        <VScroll>
          <ScrollBtn $mt="0"><Svg w={7} h={5} stroke="none"><path d="M0 4H7L3.5 0Z" fill="#666" /></Svg></ScrollBtn>
          <Thumb />
          <ScrollBtn><Svg w={7} h={5} stroke="none"><path d="M0 0H7L3.5 4Z" fill="#666" /></Svg></ScrollBtn>
        </VScroll>
        <HScroll>
          <HBtn><Svg w={5} h={7} stroke="none"><path d="M4 0V7L0 3.5Z" fill="#666" /></Svg></HBtn>
          <HTrack><HThumb /></HTrack>
          <HBtn><Svg w={5} h={7} stroke="none"><path d="M0 0V7L4 3.5Z" fill="#666" /></Svg></HBtn>
        </HScroll>
      </Workspace>

      <Cursor>
        <svg width="8" height="16" viewBox="0 0 8 16"><path d="M1 .5H7M1 15.5H7M4 .5V15.5" stroke="#222" /></svg>
      </Cursor>

      <StatusBar>
        <StatusItem>Page 1 of 2</StatusItem>
        <StatusItem $ml={18}>5 of 509 words</StatusItem>
        <StatusItem $ml={17}>
          <Svg w={14} h={13}><path d="M7 2.5C5 1 3 1 1 2V11C3 10 5 10 7 11.5C9 10 11 10 13 11V2C11 1 9 1 7 2.5ZM7 2.5V11.5" /></Svg>
        </StatusItem>
        <StatusItem $ml={17}>Arabic (Saudi Arabia)</StatusItem>
        <StatusItem $ml={27}>
          <Svg w={14} h={13}><path d="M.5 1.5H13.5V8M.5 1.5V12H7M.5 4H13.5M3 6.5H6M3 9H6" /><circle cx="10" cy="9.5" r="3" /></Svg>
        </StatusItem>
        <StatusItem $ml={602} $w={45}>
          <Svg w={14} h={14}><path d="M1 4V1H4M10 1H13V4M13 10V13H10M4 13H1V10M4.5 3H8L10 5V11H4.5Z" /></Svg>
          Focus
        </StatusItem>
        <ViewBtn $w={13} $ml={22}>
          <Svg w={13} h={12}><path d="M.5 1.5H6.5V11H.5ZM6.5 1.5H12.5V11H6.5ZM2 4H5M2 6H5M2 8H5M8 4H11M8 6H11M8 8H11" /></Svg>
        </ViewBtn>
        <ViewBtn $w={38} $ml={12} $on>
          <Svg w={11} h={13}><path d="M.5.5H10.5V12.5H.5ZM2.5 3H8.5M2.5 5H8.5M2.5 7H8.5M2.5 9H8.5" /></Svg>
        </ViewBtn>
        <ViewBtn $w={14} $ml={12}>
          <Svg w={14} h={13}><path d="M.5 1.5H11V7M.5 1.5V12H7M2 4H9M2 6H5M2 8H5" /><circle cx="10" cy="9.5" r="3" fill="#666" /></Svg>
        </ViewBtn>
        <ViewBtn $w={8} $ml={17}><Minus size={9} color="#555" /></ViewBtn>
        <ZoomSlider />
        <ViewBtn $w={9} $ml={8}><Plus size={10} color="#555" /></ViewBtn>
        <StatusItem $ml={7}>130%</StatusItem>
      </StatusBar>
      <Band $h={20} />
    </Shell>
  );
}
